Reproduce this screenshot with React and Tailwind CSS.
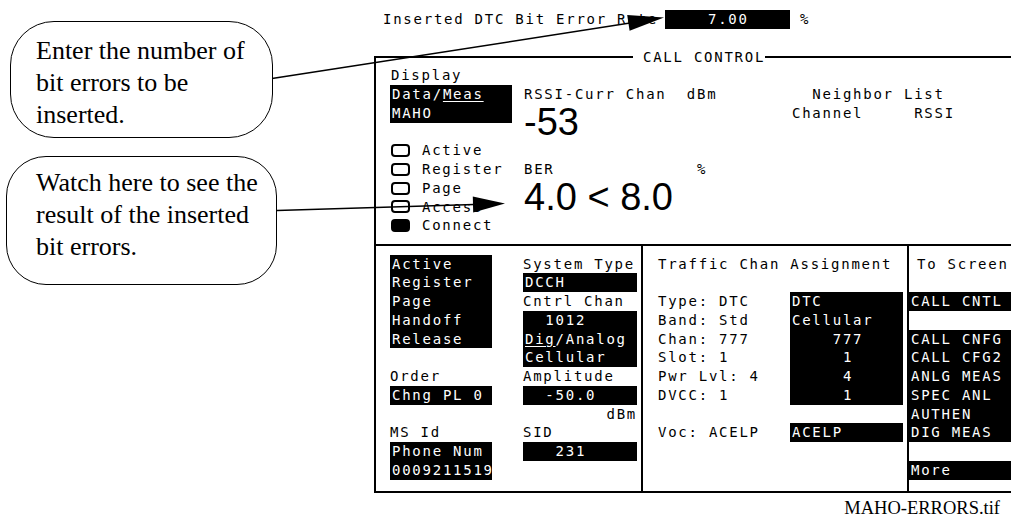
import React from 'react';

const hp = "font-['DejaVu_Sans_Mono',monospace] text-[14px] tracking-[1.75px]";
const big = "h-[37.5px] font-['Liberation_Sans',sans-serif] text-[38px] leading-[37.5px] tracking-normal";

function Row({ children, className = '' }) {
  return <div className={`h-[18.75px] leading-[18.75px] whitespace-pre ${className}`}>{children}</div>;
}

// white-on-black field, one or more screen rows
function Field({ lines }) {
  return (
    <div className="bg-black text-white">
      {lines.map((line, i) => (
        <Row key={i} className="pl-[2px]">{line}</Row>
      ))}
    </div>
  );
}

function Check({ label, on }) {
  return (
    <div className="flex items-center h-[18.75px] gap-[12px] pl-[1px]">
      <span className={`w-[19px] h-[13px] rounded-[4px] border-2 border-black ${on ? 'bg-black' : ''}`} />
      <span className="leading-[18.75px]">{label}</span>
    </div>
  );
}

const u = (t) => <span className="underline underline-offset-2">{t}</span>;

export default function App() {
  return (
    <div className="relative w-[1011px] h-[524px] overflow-hidden bg-white text-black">
      <div className="flex">
        {/* callouts */}
        <div className="w-[374px] shrink-0 pt-[21px] font-['Liberation_Serif',serif] text-[26px] leading-[32px]">
          <div className="ml-[10px] w-[263px] h-[117px] rounded-[44px] border-[1.5px] border-black pl-[25px] pt-[13px]">
            Enter the number of<br />bit errors to be<br />inserted.
          </div>
          <div className="ml-[6px] mt-[18px] w-[271px] h-[129px] rounded-[40px] border-[1.5px] border-black pl-[29px] pt-[10px]">
            Watch here to see the<br />result of the inserted<br />bit errors.
          </div>
        </div>

        {/* instrument screen */}
        <div className={`w-[720px] shrink-0 pt-[10px] ${hp}`}>
          <div className="flex items-center h-[18.75px] pl-[9px] leading-[18.75px]">
            <span className="w-[282px] shrink-0 whitespace-pre">Inserted DTC Bit Error Rate</span>
            <span className="w-[125px] h-[18.75px] shrink-0 bg-black text-white pl-[43px]">7.00</span>
            <span className="ml-[10px]">%</span>
          </div>
          <Row />
          <div className="flex h-[18.75px]">
            <div className="w-[259px] shrink-0 mt-[8px] border-t-2 border-l-2 border-black" />
            <span className="ml-[10px] leading-[18.75px] whitespace-pre">CALL CONTROL</span>
            <div className="flex-1 mt-[8px] border-t-2 border-black" />
          </div>

          <div className="h-[180px] flex border-l-2 border-b-2 border-black pl-[14px]">
            <div className="w-[122px] shrink-0">
              <Row className="pl-[1px]">Display</Row>
              <Field lines={[<>Data/{u('Meas')}</>, 'MAHO']} />
              <Row />
              <Check label="Active" />
              <Check label="Register" />
              <Check label="Page" />
              <Check label="Access" />
              <Check label="Connect" on />
            </div>
            <div className="ml-[12px] w-[268px] shrink-0">
              <Row />
              <Row>RSSI-Curr Chan  dBm</Row>
              <div className={big}>-53</div>
              <Row />
              <Row>BER              %</Row>
              <div className={`${big} whitespace-pre`}>4.0 &lt; 8.0</div>
            </div>
            <div className="shrink-0">
              <Row />
              <Row>  Neighbor List</Row>
              <Row>Channel     RSSI</Row>
            </div>
          </div>

          <div className="h-[247px] flex border-l-2 border-b-2 border-black">
            <div className="w-[267px] shrink-0 flex border-r-2 border-black pl-[14px] pt-[8.4px]">
              <div className="w-[102px] shrink-0">
                <Field lines={['Active', 'Register', 'Page', 'Handoff', 'Release']} />
                <Row />
                <Row>Order</Row>
                <Field lines={['Chng PL 0']} />
                <Row />
                <Row>MS Id</Row>
                <Field lines={['Phone Num', '0009211519']} />
              </div>
              <div className="ml-[31px] w-[114px] shrink-0">
                <Row>System Type</Row>
                <Field lines={['DCCH']} />
                <Row>Cntrl Chan</Row>
                <Field lines={['  1012', <>{u('Dig')}/Analog</>, 'Cellular']} />
                <Row>Amplitude</Row>
                <Field lines={['  -50.0']} />
                <Row className="text-right">dBm</Row>
                <Row>SID</Row>
                <Field lines={['   231']} />
              </div>
            </div>
            <div className="w-[266px] shrink-0 flex border-r-2 border-black pl-[15px] pt-[8.4px]">
              <div className="w-[132px] shrink-0">
                <Row>Traffic Chan Assignment</Row>
                <Row />
                <Row>Type: DTC</Row>
                <Row>Band: Std</Row>
                <Row>Chan: 777</Row>
                <Row>Slot: 1</Row>
                <Row>Pwr Lvl: 4</Row>
                <Row>DVCC: 1</Row>
                <Row />
                <Row>Voc: ACELP</Row>
              </div>
              <div className="w-[113px] shrink-0">
                <Row />
                <Row />
                <Field lines={['DTC', 'Cellular', '    777', '     1', '     4', '     1']} />
                <Row />
                <Field lines={['ACELP']} />
              </div>
            </div>
            <div className="w-[120px] shrink-0 pt-[8.4px]">
              <Row className="pl-[8px]">To Screen</Row>
              <Row />
              <Field lines={['CALL CNTL']} />
              <Row />
              <Field lines={['CALL CNFG', 'CALL CFG2', 'ANLG MEAS', 'SPEC ANL', 'AUTHEN', 'DIG MEAS']} />
              <Row />
              <Field lines={['More']} />
            </div>
          </div>
        </div>
      </div>

      <p className="mt-[4px] pr-[11px] text-right font-['Liberation_Serif',serif] text-[18.5px] leading-[22px]">
        MAHO-ERRORS.tif
      </p>

      {/* callout leaders */}
      <svg className="absolute left-0 top-0 pointer-events-none" width="1011" height="524" viewBox="0 0 1011 524">
        <line x1="272" y1="78.6" x2="630" y2="23" stroke="black" strokeWidth="1.5" />
        <polygon points="664,17.4 629.6,30.8 627.2,15" fill="black" />
        <line x1="277" y1="210.5" x2="474" y2="204.5" stroke="black" strokeWidth="1.5" />
        <polygon points="505,203.5 473.2,212.5 472.8,196.5" fill="black" />
      </svg>
    </div>
  );
}
